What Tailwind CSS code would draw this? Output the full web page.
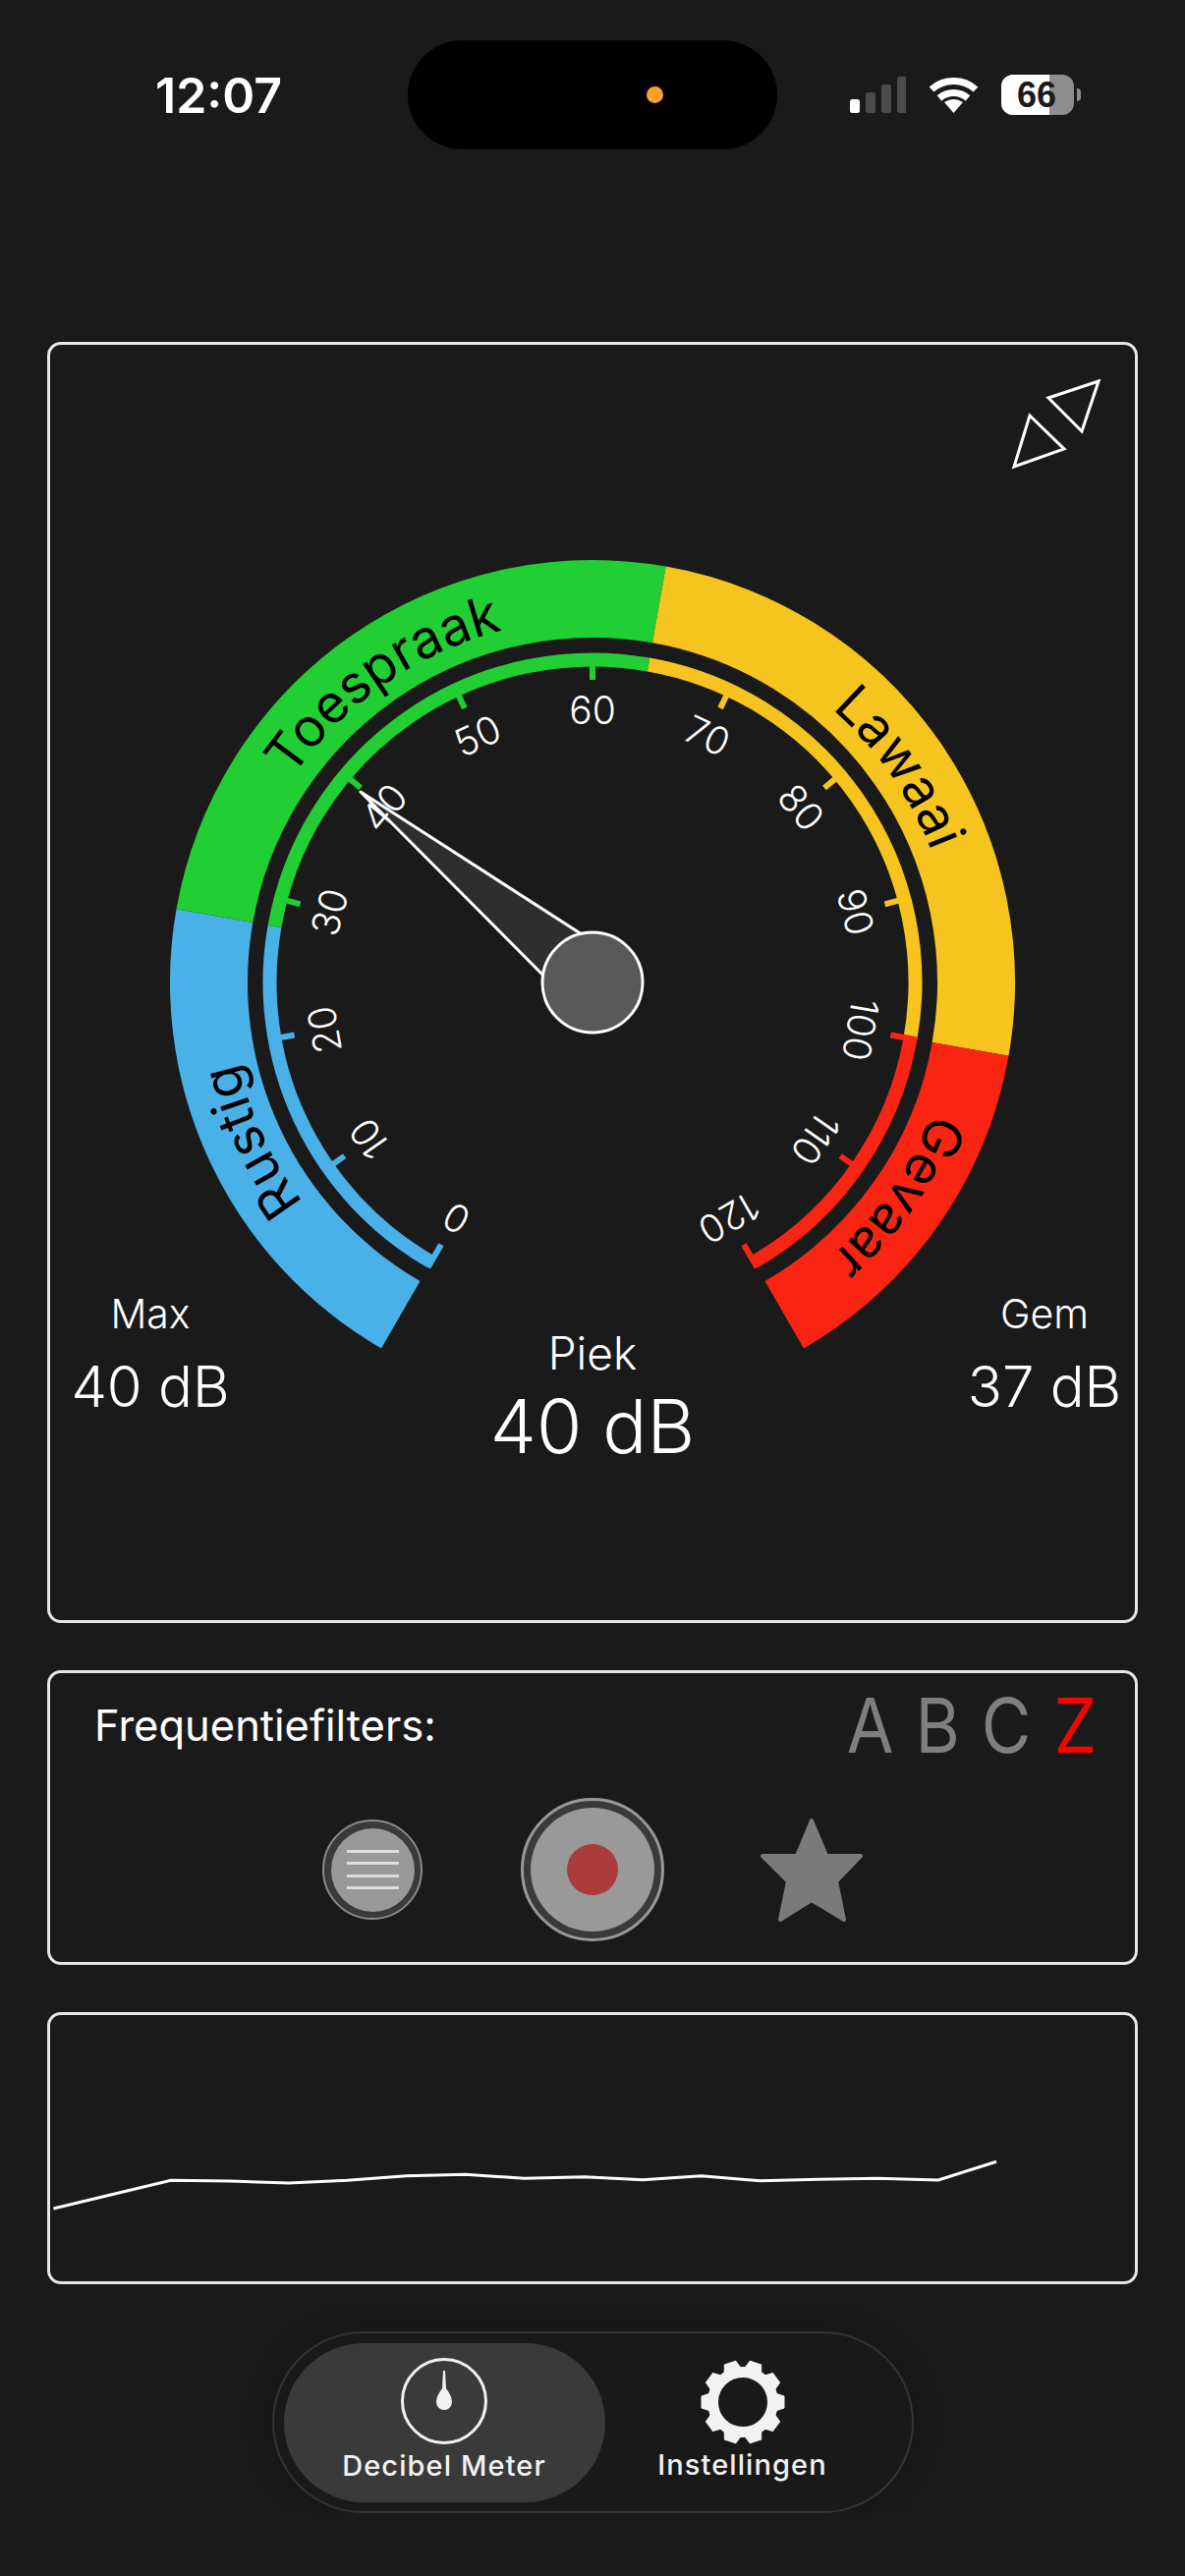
<!DOCTYPE html>
<html lang="en">
  <head>
    <meta charset="UTF-8" />
    <meta name="viewport" content="width=device-width, initial-scale=1.0" />
    <title>Decibel Meter</title>
    <script src="https://cdn.jsdelivr.net/npm/@tailwindcss/browser@4"></script>
  </head>
  <body class="bg-[#1a1a1a] text-white font-['Inter',sans-serif]">
    <!-- status bar -->
    <header class="flex h-[193px] items-center pl-[158px]">
      <div class="w-[257px] text-[50px] font-semibold leading-none">12:07</div>
      <div class="relative h-[111px] w-[376px] rounded-full bg-black">
        <div class="absolute left-[243px] top-[47px] h-[17px] w-[17px] rounded-full bg-[#ff9f2e]"></div>
      </div>
      <div class="ml-[74px] flex items-center gap-[23px]">
        <svg class="block" width="57" height="38" viewBox="865 79 57 38">
          <rect x="865" y="102" width="10" height="14" rx="2.5" fill="#ffffff" />
          <rect x="881" y="95" width="10" height="21" rx="2.5" fill="#4c4c4c" />
          <rect x="897" y="87" width="10" height="29" rx="2.5" fill="#4c4c4c" />
          <rect x="913" y="79" width="10" height="37" rx="2.5" fill="#4c4c4c" />
        </svg>
        <svg class="block" width="51" height="38" viewBox="945 79 51 38">
          <path d="M948 92 A 34 34 0 0 1 993 92" fill="none" stroke="#ffffff" stroke-width="7" />
          <path d="M956 101 A 22 22 0 0 1 985 101" fill="none" stroke="#ffffff" stroke-width="7" />
          <path d="M970.5 116 L961 105 Q970.5 99 980 105 Z" fill="#ffffff" />
        </svg>
        <div class="relative h-[41px] w-[74px] overflow-hidden rounded-[12px] bg-[#8e8e8e]">
          <div class="h-full w-[49px] bg-white"></div>
          <div class="absolute inset-0 flex items-center justify-center pr-[2px] font-['Liberation_Sans',sans-serif] text-[36px] font-bold leading-none text-[#1a1a1a]">66</div>
        </div>
      </div>
      <div class="ml-[3px] h-[13px] w-[4px] rounded-r-full bg-[#8e8e8e]"></div>
    </header>

    <main class="flex flex-col gap-12 px-12 pt-[155px]">
      <!-- gauge card -->
      <section class="h-[1304px] rounded-[14px] border-[3px] border-[#e6e6e6]">
        <svg class="block" width="1104" height="1030" viewBox="51 351 1104 1030">
          <!-- expand -->
          <path d="M1118 388 L1067 405 L1101 439 Z" fill="none" stroke="#ffffff" stroke-width="3" />
          <path d="M1048 423 L1083 457 L1032 475 Z" fill="none" stroke="#ffffff" stroke-width="3" />

          <!-- outer band -->
          <g fill="none" stroke-width="79">
            <path d="M407.75 1338.18 A 390.5 390.5 0 0 1 218.43 932.19" stroke="#4ab0e8" />
            <path d="M218.43 932.19 A 390.5 390.5 0 0 1 670.81 615.43" stroke="#21ce33" />
            <path d="M670.81 615.43 A 390.5 390.5 0 0 1 987.57 1067.81" stroke="#f5c41f" />
            <path d="M987.57 1067.81 A 390.5 390.5 0 0 1 798.25 1338.18" stroke="#f92512" />
          </g>

          <!-- band names -->
          <defs>
            <path id="arc-rustig" d="M418 1320.43 A 370 370 0 0 1 238.62 935.75" />
            <path id="arc-toespraak" d="M238.62 935.75 A 370 370 0 0 1 667.25 635.62" />
            <path id="arc-lawaai" d="M667.25 635.62 A 370 370 0 0 1 967.38 1064.25" />
            <path id="arc-gevaar" d="M967.38 1064.25 A 370 370 0 0 1 788 1320.43" />
          </defs>
          <g class="fill-black text-[54px] font-normal" text-anchor="middle">
            <text><textPath href="#arc-rustig" startOffset="50%">Rustig</textPath></text>
            <text><textPath href="#arc-toespraak" startOffset="50%">Toespraak</textPath></text>
            <text><textPath href="#arc-lawaai" startOffset="50%">Lawaai</textPath></text>
            <text><textPath href="#arc-gevaar" startOffset="50%">Gevaar</textPath></text>
          </g>

          <!-- inner band -->
          <g fill="none" stroke-width="14">
            <path d="M438.75 1284.49 A 328.5 328.5 0 0 1 279.49 942.96" stroke="#4ab0e8" />
            <path d="M279.49 942.96 A 328.5 328.5 0 0 1 660.04 676.49" stroke="#21ce33" />
            <path d="M660.04 676.49 A 328.5 328.5 0 0 1 926.51 1057.04" stroke="#f5c41f" />
            <path d="M926.51 1057.04 A 328.5 328.5 0 0 1 767.25 1284.49" stroke="#f92512" />
          </g>

          <!-- ticks -->
          <g>
            <rect x="600" y="665" width="6" height="27" fill="#4ab0e8" transform="rotate(-150 603 1000)" />
            <rect x="600" y="675" width="6" height="17" fill="#4ab0e8" transform="rotate(-125 603 1000)" />
            <rect x="600" y="675" width="6" height="17" fill="#4ab0e8" transform="rotate(-100 603 1000)" />
            <rect x="600" y="675" width="6" height="17" fill="#21ce33" transform="rotate(-75 603 1000)" />
            <rect x="600" y="675" width="6" height="17" fill="#21ce33" transform="rotate(-50 603 1000)" />
            <rect x="600" y="675" width="6" height="17" fill="#21ce33" transform="rotate(-25 603 1000)" />
            <rect x="600" y="675" width="6" height="17" fill="#21ce33" />
            <rect x="600" y="675" width="6" height="17" fill="#f5c41f" transform="rotate(25 603 1000)" />
            <rect x="600" y="675" width="6" height="17" fill="#f5c41f" transform="rotate(50 603 1000)" />
            <rect x="600" y="675" width="6" height="17" fill="#f5c41f" transform="rotate(75 603 1000)" />
            <rect x="600" y="665" width="6" height="27" fill="#f92512" transform="rotate(100 603 1000)" />
            <rect x="600" y="675" width="6" height="17" fill="#f92512" transform="rotate(125 603 1000)" />
            <rect x="600" y="665" width="6" height="27" fill="#f92512" transform="rotate(150 603 1000)" />
          </g>

          <!-- needle -->
          <path d="M367 806 L620 969 L570 1010 Z" fill="#2e2e2e" stroke="#ffffff" stroke-width="3" stroke-linejoin="round" />

          <!-- scale numbers -->
          <g class="fill-white text-[39px] font-light" text-anchor="middle">
            <text x="603" y="737" transform="rotate(-150 603 1000)">0</text>
            <text x="603" y="737" transform="rotate(-125 603 1000)">10</text>
            <text x="603" y="737" transform="rotate(-100 603 1000)">20</text>
            <text x="603" y="737" transform="rotate(-75 603 1000)">30</text>
            <text x="603" y="737" transform="rotate(-50 603 1000)">40</text>
            <text x="603" y="737" transform="rotate(-25 603 1000)">50</text>
            <text x="603" y="737">60</text>
            <text x="603" y="737" transform="rotate(25 603 1000)">70</text>
            <text x="603" y="737" transform="rotate(50 603 1000)">80</text>
            <text x="603" y="737" transform="rotate(75 603 1000)">90</text>
            <text x="603" y="737" transform="rotate(100 603 1000)">100</text>
            <text x="603" y="737" transform="rotate(125 603 1000)">110</text>
            <text x="603" y="737" transform="rotate(150 603 1000)">120</text>
          </g>

          <circle cx="603" cy="1000" r="51" fill="#595959" stroke="#ffffff" stroke-width="3" />
        </svg>

        <div class="-mt-[68px] grid grid-cols-[202px_1fr_202px] text-center font-light">
          <div class="pl-[2px]">
            <div class="text-[41px] leading-[49px]">Max</div>
            <div class="mt-[14px] text-[58px] leading-[70px]">40 dB</div>
          </div>
          <div class="pt-[36px]">
            <div class="text-[46px] leading-[56px]">Piek</div>
            <div class="mt-[2px] text-[75px] leading-[90px]">40 dB</div>
          </div>
          <div class="pl-[18px]">
            <div class="text-[41px] leading-[49px]">Gem</div>
            <div class="mt-[14px] text-[58px] leading-[70px]">37 dB</div>
          </div>
        </div>
      </section>

      <!-- filters card -->
      <section class="h-[300px] rounded-[14px] border-[3px] border-[#e6e6e6]">
        <div class="flex h-[92px] items-end justify-between pl-[45px] pr-[40px]">
          <div class="h-[78px] text-[43.5px] font-normal leading-[78px]">Frequentiefilters:</div>
          <div class="flex gap-[23px] text-[77px] font-normal leading-none text-[#7f7f7f]">
            <span class="-mx-[3px] scale-x-90">A</span>
            <span class="-mx-[3px] scale-x-90">B</span>
            <span class="-mx-[3px] scale-x-90">C</span>
            <span class="-mx-[3px] scale-x-90 text-[#ff0000]">Z</span>
          </div>
        </div>
        <div class="mt-[35px] ml-[3px] flex items-center justify-center">
          <button class="flex h-[102px] w-[102px] items-center justify-center rounded-full border-2 border-[#8a8a8a] bg-[#3a3a3a]">
            <span class="flex h-[85px] w-[85px] flex-col items-center justify-center gap-[9.5px] rounded-full bg-[#999999]">
              <span class="h-[3px] w-[53px] bg-[#dddddd]"></span>
              <span class="h-[3px] w-[53px] bg-[#dddddd]"></span>
              <span class="h-[3px] w-[53px] bg-[#dddddd]"></span>
              <span class="h-[3px] w-[53px] bg-[#dddddd]"></span>
            </span>
          </button>
          <button class="ml-[100px] flex h-[146px] w-[146px] items-center justify-center rounded-full border-[3px] border-[#999999] bg-[#3a3a3a]">
            <span class="flex h-[126px] w-[126px] items-center justify-center rounded-full bg-[#999999]">
              <span class="h-[52px] w-[52px] rounded-full bg-[#aa3c3c]"></span>
            </span>
          </button>
          <svg class="ml-[96px] block" width="109" height="109" viewBox="772 1848 109 109">
            <path d="M826 1852 L841 1888 L876 1888 L851 1914 L859 1953 L826 1933 L794 1953 L802 1914 L776 1888 L811 1888 Z" fill="#7a7a7a" stroke="#7a7a7a" stroke-width="4" stroke-linejoin="round" />
          </svg>
        </div>
      </section>

      <!-- history chart -->
      <section class="h-[277px] rounded-[14px] border-[3px] border-[#e6e6e6]">
        <svg class="block" width="1104" height="271" viewBox="51 2051 1104 271">
          <polyline
            points="54.4,2248 174,2219.3 234.6,2220 293.7,2222 353.5,2219.3 413.3,2214.7 473.8,2213.3 533.7,2217.3 595,2215.7 654,2218.7 713.8,2214.7 773.6,2219.7 832.7,2218.3 893,2217.3 955,2219 1014,2200.3"
            fill="none"
            stroke="#ffffff"
            stroke-width="3"
          />
        </svg>
      </section>

      <!-- tab bar -->
      <nav class="mx-auto flex h-[185px] w-[653px] rounded-full border-2 border-[#333333] bg-[#191919] p-[10px] shadow-[0_0_30px_rgba(0,0,0,0.2)]">
        <a class="flex h-[162px] w-[327px] flex-col items-center rounded-full bg-[#3a3a3a] pt-[14px]">
          <svg class="block" width="90" height="90" viewBox="0 0 90 90">
            <circle cx="45" cy="45" r="42.5" fill="none" stroke="#f2f2f2" stroke-width="3" />
            <path d="M44 14 L46 14 L47 32 Q53 40 53 46 A 8 8 0 0 1 37 46 Q37 40 43 32 Z" fill="#f2f2f2" />
          </svg>
          <span class="mt-[3px] text-[29px] font-medium leading-[36px] tracking-[1.1px] text-[#f2f2f2]">Decibel Meter</span>
        </a>
        <a class="flex h-[162px] w-[280px] flex-col items-center pt-[15px]">
          <svg class="block" width="90" height="90" viewBox="0 0 90 90">
            <defs>
              <path id="gear-tooth" d="M78 36 L87 39 L87 51 L78 54 Z" fill="#f2f2f2" stroke="#f2f2f2" stroke-width="1" stroke-linejoin="round" />
            </defs>
            <circle cx="45" cy="45" r="30.5" fill="none" stroke="#f2f2f2" stroke-width="11" />
            <use href="#gear-tooth" />
            <use href="#gear-tooth" transform="rotate(36 45 45)" />
            <use href="#gear-tooth" transform="rotate(72 45 45)" />
            <use href="#gear-tooth" transform="rotate(108 45 45)" />
            <use href="#gear-tooth" transform="rotate(144 45 45)" />
            <use href="#gear-tooth" transform="rotate(180 45 45)" />
            <use href="#gear-tooth" transform="rotate(216 45 45)" />
            <use href="#gear-tooth" transform="rotate(252 45 45)" />
            <use href="#gear-tooth" transform="rotate(288 45 45)" />
            <use href="#gear-tooth" transform="rotate(324 45 45)" />
          </svg>
          <span class="mt-[1px] text-[29px] font-medium leading-[36px] tracking-[1.1px] text-[#f2f2f2]">Instellingen</span>
        </a>
      </nav>
    </main>
  </body>
</html>
